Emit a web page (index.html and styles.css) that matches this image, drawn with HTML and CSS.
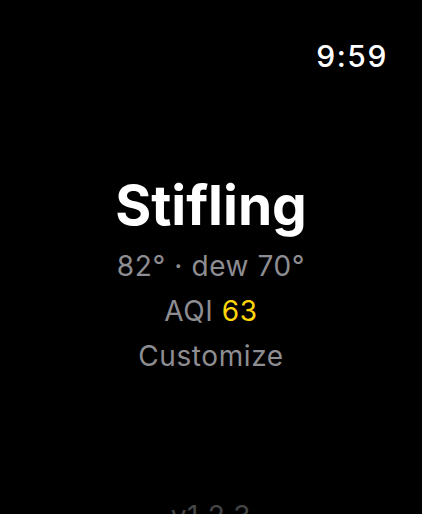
FILE: index.html
```html
<!DOCTYPE html>
<html>
<head>
<meta charset="utf-8">
<link rel="stylesheet" href="styles.css">
</head>
<body>
<div class="screen">
  <div class="status"><span class="time">9:59</span></div>
  <div class="main">
    <div class="title">Stifling</div>
    <div class="line">82° · dew 70°</div>
    <div class="line">AQI <span class="aqi">63</span></div>
    <div class="line">Customize</div>
  </div>
  <div class="version">v1.2.3</div>
</div>
</body>
</html>
```
FILE: styles.css
```css
html, body {
  margin: 0;
  padding: 0;
  background: #000;
}
.screen {
  width: 422px;
  height: 514px;
  overflow: hidden;
  background: #000;
  font-family: Inter, "Noto Sans", sans-serif;
  display: flex;
  flex-direction: column;
}
.status {
  display: flex;
  justify-content: flex-end;
  padding: 38px 34px 0 0;
  height: 40px;
}
.time {
  color: #fff;
  font-size: 30px;
  font-weight: 500;
  letter-spacing: 1.6px;
  line-height: 36px;
}
.main {
  display: flex;
  flex-direction: column;
  align-items: center;
  margin-top: 102px;
}
.title {
  color: #fff;
  font-size: 55px;
  font-weight: 700;
  line-height: 58px;
  margin-bottom: 10px;
}
.line {
  color: #8d8d92;
  font-size: 28px;
  letter-spacing: 0.6px;
  line-height: 45px;
}
.aqi {
  color: #ffd60a;
}
.version {
  margin-top: 119px;
  text-align: center;
  color: #454545;
  font-size: 28px;
  letter-spacing: 0.6px;
  line-height: 36px;
}
```
